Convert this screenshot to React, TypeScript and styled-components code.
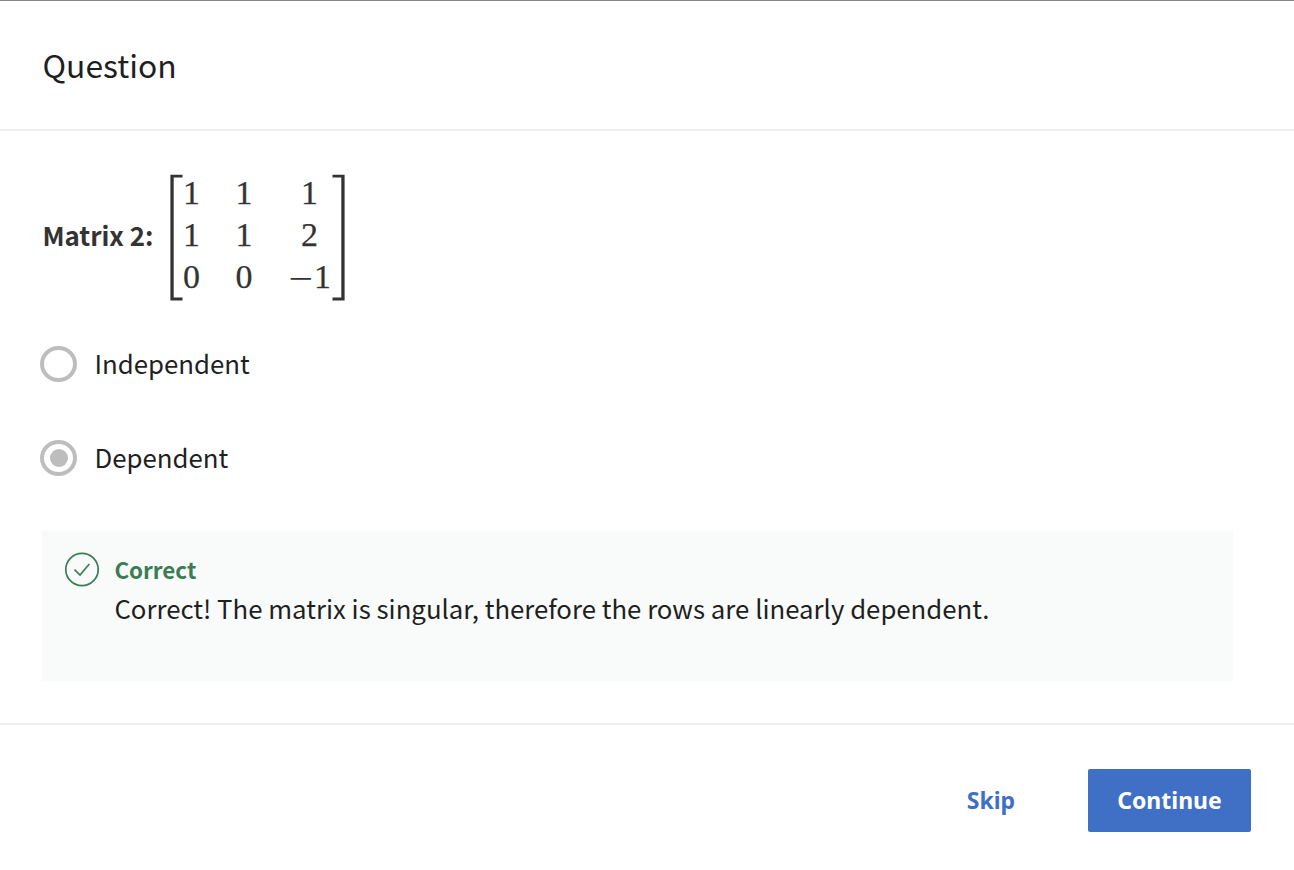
import React from "react";
import styled, { createGlobalStyle } from "styled-components";

const GlobalStyle = createGlobalStyle`
  * { box-sizing: border-box; }
  body { margin: 0; background: #fff; }
`;

const textFont = `"Noto Sans CJK SC", sans-serif`;

const Page = styled.div`
  display: flex;
  flex-direction: column;
  height: 870px;
  border-top: 1px solid #888;
  font-family: ${textFont};
  color: #1f1f1f;
`;

const Header = styled.header`
  display: flex;
  align-items: center;
  height: 130px;
  padding: 0 42.5px 2px;
  border-bottom: 2px solid #eee;
`;

const Title = styled.h1`
  margin: 0;
  font-size: 31.8px;
  line-height: 46px;
  font-weight: 400;
`;

const Body = styled.main`
  display: flex;
  flex-direction: column;
  height: 594px;
  padding: 44px 61px 0 42px;
  border-bottom: 2px solid #eee;
`;

const Prompt = styled.div`
  display: flex;
  align-items: center;
  height: 125px;
  color: #333;
`;

const PromptLabel = styled.strong`
  width: 128px;
  padding: 0 0 5px 0.4px;
  font-size: 25.9px;
  line-height: 38px;
  font-weight: 700;
  white-space: nowrap;
`;

const BracketShape = styled.svg<{ $flip?: boolean }>`
  flex: none;
  width: 13px;
  height: 127px;
  fill: #333;
  transform: ${(p) => (p.$flip ? "scaleX(-1)" : "none")};
`;

const Matrix = styled.div`
  display: grid;
  grid-template-columns: 17px 17px 43px;
  grid-auto-rows: 42px;
  column-gap: 35.5px;
  width: 149px;
  padding-bottom: 6px;
  height: 132px;
  font-family: "Liberation Serif", serif;
  font-size: 34px;
  line-height: 42px;
  text-align: center;
  -webkit-text-stroke: 0.25px #333;
`;

const Cell = styled.span`
  display: flex;
  justify-content: center;
`;

const Minus = styled.span`
  width: 26px;
  transform: translate(-0.5px, 2px) scaleX(1.28);
  -webkit-text-stroke: 0;
`;

const Options = styled.div`
  display: flex;
  flex-direction: column;
  gap: 58px;
  margin-top: 46px;
`;

const Option = styled.label`
  display: flex;
  align-items: center;
  height: 36px;
  margin-left: -2px;
  gap: 17.4px;
  font-size: 25.8px;
  line-height: 36px;
`;

const OptionText = styled.span`
  padding-bottom: 2px;
`;

const Radio = styled.span`
  display: grid;
  place-items: center;
  width: 37px;
  height: 36px;
  border: 4px solid #bdbdbd;
  border-radius: 50%;
`;

const Dot = styled.span`
  width: 18px;
  height: 18px;
  border-radius: 50%;
  background: #bdbdbd;
`;

const Feedback = styled.section`
  display: flex;
  height: 150px;
  margin-top: 55px;
  padding: 21px 23px;
  gap: 15.4px;
  background: #f9fbfa;
`;

const FeedbackText = styled.div`
  display: flex;
  flex-direction: column;
`;

const Verdict = styled.strong`
  color: #3a7d54;
  font-size: 22.4px;
  line-height: 34px;
  font-weight: 700;
`;

const Message = styled.p`
  margin: 0;
  font-size: 25.78px;
  line-height: 43px;
  white-space: nowrap;
`;

const Footer = styled.footer`
  display: flex;
  justify-content: flex-end;
  padding: 44px 43px 0;
  gap: 43px;
`;

const Button = styled.button<{ $primary?: boolean }>`
  width: ${(p) => (p.$primary ? 163 : 108)}px;
  height: 63px;
  padding: 0;
  border: 0;
  border-radius: 2px;
  background: ${(p) => (p.$primary ? "#4070c6" : "transparent")};
  color: ${(p) => (p.$primary ? "#fff" : "#4070c6")};
  font: 700 23px/63px "Noto Sans", sans-serif;
`;

const rows = [
  ["1", "1", "1"],
  ["1", "1", "2"],
  ["0", "0", "-1"],
];

const Bracket = ({ flip }: { flip?: boolean }) => (
  <BracketShape $flip={flip} viewBox="0 0 13 127">
    <path d="M0.4 0.8H12.5V3.6H3.7V123.6H12.5V126.4H0.4Z" />
  </BracketShape>
);

const CheckIcon = () => (
  <svg width="34" height="36" viewBox="0 0 34 36" fill="none" stroke="#3a7d54">
    <circle cx="17" cy="17.5" r="16.2" strokeWidth="1.7" />
    <path d="M9.5 17.7 15 23 24.3 12" strokeWidth="1.7" />
  </svg>
);

export default function App() {
  return (
    <>
      <GlobalStyle />
      <Page>
        <Header>
          <Title>Question</Title>
        </Header>
        <Body>
          <Prompt>
            <PromptLabel>Matrix 2:</PromptLabel>
            <Bracket />
            <Matrix>
              {rows.flat().map((value, i) => (
                <Cell key={i}>
                  {value.startsWith("-") ? (
                    <>
                      <Minus>−</Minus>
                      {value.slice(1)}
                    </>
                  ) : (
                    value
                  )}
                </Cell>
              ))}
            </Matrix>
            <Bracket flip />
          </Prompt>
          <Options>
            <Option>
              <Radio />
              <OptionText>Independent</OptionText>
            </Option>
            <Option>
              <Radio>
                <Dot />
              </Radio>
              <OptionText>Dependent</OptionText>
            </Option>
          </Options>
          <Feedback>
            <CheckIcon />
            <FeedbackText>
              <Verdict>Correct</Verdict>
              <Message>Correct! The matrix is singular, therefore the rows are linearly dependent.</Message>
            </FeedbackText>
          </Feedback>
        </Body>
        <Footer>
          <Button>Skip</Button>
          <Button $primary>Continue</Button>
        </Footer>
      </Page>
    </>
  );
}
